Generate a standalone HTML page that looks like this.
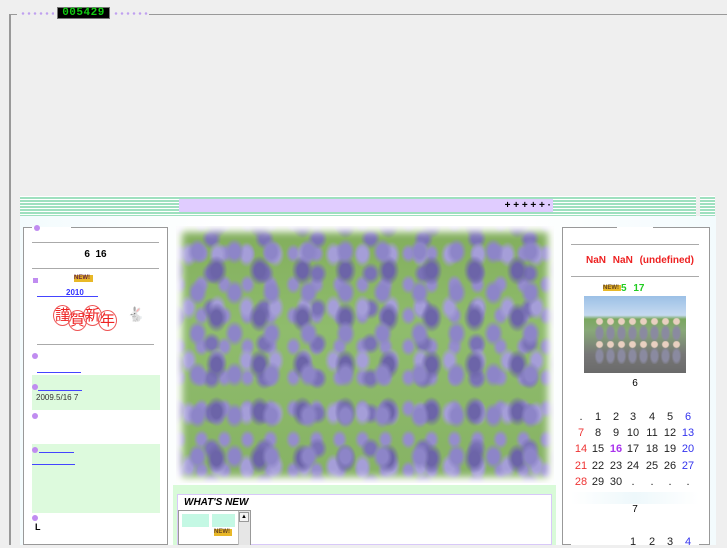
<!DOCTYPE html>
<html><head><meta charset="utf-8"><style>
*{margin:0;padding:0;box-sizing:border-box}
body{width:727px;height:545px;overflow:hidden;background:#efefef;font-family:"Liberation Sans","Noto Sans CJK JP",sans-serif;position:relative}
.a{position:absolute}
.dot{position:absolute;width:6px;height:6px;border-radius:50%;background:#c08cf0}
.stripe{background:repeating-linear-gradient(#fff 0 1px,#9ee0bf 1px 3px)}
.ul{position:absolute;height:1px;background:#4444ff}
.photo{background:
radial-gradient(ellipse 10px 13px at 50% 50%,#8d85c8 0 50%,transparent 100%) 3px 5px/37px 41px,
radial-gradient(ellipse 11px 15px at 50% 50%,#6c64a8 0 45%,transparent 100%) 19px 21px/43px 47px,
radial-gradient(ellipse 9px 13px at 50% 50%,#a59ed8 0 45%,transparent 100%) 27px 2px/29px 53px,
radial-gradient(ellipse 10px 11px at 50% 50%,#7a72b6 0 45%,transparent 100%) 9px 30px/53px 35px,
radial-gradient(ellipse 8px 10px at 50% 50%,#958dcc 0 45%,transparent 100%) 14px 12px/23px 31px,
linear-gradient(#82ae5c,#8fbc6c 40%,#86b264);
box-shadow:inset 0 0 8px 6px #fff;}
.cal span{position:absolute;width:18px;text-align:center;font-size:11px;color:#222}
.st{display:inline-block;width:19px;height:21px;border:1px solid #e55;border-radius:50%;text-align:center;line-height:19px;font-size:15px;color:#e22;margin-right:-4px}
</style></head><body>
<div class="a" style="left:9px;top:14px;width:2px;height:531px;background:#999"></div>
<div class="a" style="left:9px;top:14px;width:8px;height:1px;background:#999"></div>
<div class="a" style="left:149px;top:14px;width:578px;height:1px;background:#999"></div>
<div class="a" style="left:20px;top:12px;width:34px;height:3px;background:radial-gradient(circle,#c0a0f0 1px,transparent 1.5px) 0 0/6px 3px"></div>
<div class="a" style="left:113px;top:12px;width:36px;height:3px;background:radial-gradient(circle,#c0a0f0 1px,transparent 1.5px) 0 0/6px 3px"></div>
<div class="a" style="left:57px;top:7px;width:53px;height:12px;background:#000;border:1px solid #777;color:#1c1;font:bold 11px/10px 'Liberation Mono',monospace;letter-spacing:0.5px;text-align:center">005429</div>

<div class="a stripe" style="left:20px;top:196px;width:676px;height:20px"></div>
<div class="a stripe" style="left:700px;top:196px;width:15px;height:20px"></div>
<div class="a" style="left:179px;top:199px;width:374px;height:13px;background:#e0ccff;font-size:10px;font-weight:bold;text-align:right;line-height:13px;padding-right:2px">+ + + + + ·</div>
<div class="a" style="left:20px;top:216px;width:696px;height:329px;background:linear-gradient(90deg,#f3fbfd,#fff 30%,#fff 70%,#f3fbfd)"></div>

<div class="a" style="left:23px;top:227px;width:145px;height:318px;border:1px solid #999;border-top:none;background:#fff"></div>
<div class="a" style="left:23px;top:227px;width:9px;height:1px;background:#999"></div>
<div class="a" style="left:71px;top:227px;width:97px;height:1px;background:#999"></div>
<div class="dot" style="left:34px;top:225px"></div>
<div class="a" style="left:32px;top:242px;width:127px;height:1px;background:#aaa"></div>
<div class="a" style="left:32px;top:249px;width:127px;text-align:center;font-size:10px;font-weight:bold">6&nbsp; 16</div>
<div class="a" style="left:32px;top:268px;width:127px;height:1px;background:#aaa"></div>
<div class="a" style="left:33px;top:278px;width:5px;height:5px;background:#c08cf0"></div>
<div class="a" style="left:74px;top:275px;width:19px;height:7px;background:#e8b828;font-size:6px;font-weight:bold;line-height:7px;color:#624">NEW!</div>
<div class="a" style="left:66px;top:288px;font-size:8px;font-weight:bold;color:#33f">2010</div>
<div class="ul" style="left:37px;top:296px;width:61px"></div>
<div class="a" style="left:53px;top:305px;white-space:nowrap"><span class="st">謹</span><span class="st" style="position:relative;top:5px">賀</span><span class="st">新</span><span class="st" style="position:relative;top:5px">年</span></div>
<div class="a" style="left:127px;top:306px;font-size:14px;color:#999">🐇</div>
<div class="a" style="left:37px;top:344px;width:117px;height:1px;background:#aaa"></div>
<div class="dot" style="left:32px;top:353px"></div>
<div class="ul" style="left:37px;top:372px;width:44px"></div>
<div class="a" style="left:32px;top:375px;width:128px;height:35px;background:#ddfadd"></div>
<div class="dot" style="left:32px;top:384px"></div>
<div class="ul" style="left:38px;top:390px;width:44px"></div>
<div class="a" style="left:36px;top:393px;font-size:8px;color:#333">2009.5/16 7</div>
<div class="dot" style="left:32px;top:413px"></div>
<div class="a" style="left:32px;top:444px;width:128px;height:69px;background:#ddfadd"></div>
<div class="dot" style="left:32px;top:447px"></div>
<div class="ul" style="left:39px;top:452px;width:35px"></div>
<div class="ul" style="left:32px;top:464px;width:43px"></div>
<div class="dot" style="left:32px;top:515px"></div>
<div class="a" style="left:35px;top:522px;font-size:9px;font-weight:bold">L</div>

<div class="a photo" style="left:176px;top:226px;width:378px;height:257px"></div>
<div class="a" style="left:173px;top:485px;width:383px;height:60px;background:#d8fad8"></div>
<div class="a" style="left:177px;top:494px;width:375px;height:51px;background:#fff;border:1px solid #d8c8f8"></div>
<div class="a" style="left:184px;top:497px;font-size:10px;font-weight:bold;font-style:italic">WHAT'S NEW</div>
<div class="a" style="left:178px;top:510px;width:73px;height:35px;border:1px solid #999;background:#fff"></div>
<div class="a" style="left:182px;top:514px;width:27px;height:13px;background:#c4f8e4"></div>
<div class="a" style="left:212px;top:514px;width:23px;height:13px;background:#c4f8e4"></div>
<div class="a" style="left:214px;top:529px;width:18px;height:7px;background:#e8b828;font-size:6px;font-weight:bold;line-height:7px;color:#642">NEW!</div>
<div class="a" style="left:238px;top:511px;width:12px;height:34px;background:#e6e6e6;border-left:1px solid #bbb"></div>
<div class="a" style="left:239px;top:512px;width:10px;height:10px;background:#f4f4f4;border:1px solid #999;font-size:6px;text-align:center;line-height:9px">▲</div>

<div class="a" style="left:562px;top:227px;width:148px;height:318px;border:1px solid #999;border-top:none;background:#fff"></div>
<div class="a" style="left:562px;top:227px;width:55px;height:1px;background:#999"></div>
<div class="a" style="left:653px;top:227px;width:57px;height:1px;background:#999"></div>
<div class="a" style="left:571px;top:244px;width:128px;height:1px;background:#aaa"></div>
<div class="a" style="left:586px;top:255px;font-size:10px;font-weight:bold;color:#e22;word-spacing:4px">NaN NaN (undefined)</div>
<div class="a" style="left:571px;top:276px;width:128px;height:1px;background:#aaa"></div>
<div class="a" style="left:603px;top:285px;width:18px;height:6px;background:#e8b828;font-size:6px;font-weight:bold;line-height:6px;color:#642">NEW!</div>
<div class="a" style="left:621px;top:283px;font-size:10px;font-weight:bold;color:#2c2;word-spacing:4px">5 17</div>
<div class="a" style="left:584px;top:296px;width:102px;height:77px;background:linear-gradient(#9cc0e6 0,#c6daf0 25%,#7aa860 30%,#88a878 45%,#777 75%,#6a6a6a 100%)"></div>
<div class="a" style="left:594px;top:318px;width:88px;height:46px;background:
radial-gradient(ellipse 4px 4px at 50% 15%,#e8d0c0 0 70%,transparent 100%) 0 0/11px 23px,
radial-gradient(ellipse 5px 9px at 50% 65%,#8a8aa0 0 60%,transparent 100%) 0 0/11px 23px"></div>
<div class="a" style="left:571px;top:376px;width:128px;height:169px;background:#fff"></div>
<div class="a" style="left:571px;top:378px;width:128px;text-align:center;font-size:10px">6</div>
<div class="cal">
<span style="left:572px;top:411px">.</span><span style="left:589px;top:411px">1</span><span style="left:607px;top:411px">2</span><span style="left:624px;top:411px">3</span><span style="left:643px;top:411px">4</span><span style="left:661px;top:411px">5</span><span style="left:679px;top:411px;color:#33e">6</span>
<span style="left:572px;top:427px;color:#e33">7</span><span style="left:589px;top:427px">8</span><span style="left:607px;top:427px">9</span><span style="left:624px;top:427px">10</span><span style="left:643px;top:427px">11</span><span style="left:661px;top:427px">12</span><span style="left:679px;top:427px;color:#33e">13</span>
<span style="left:572px;top:443px;color:#e33">14</span><span style="left:589px;top:443px">15</span><span style="left:607px;top:443px;color:#a3e;font-weight:bold">16</span><span style="left:624px;top:443px">17</span><span style="left:643px;top:443px">18</span><span style="left:661px;top:443px">19</span><span style="left:679px;top:443px;color:#33e">20</span>
<span style="left:572px;top:460px;color:#e33">21</span><span style="left:589px;top:460px">22</span><span style="left:607px;top:460px">23</span><span style="left:624px;top:460px">24</span><span style="left:643px;top:460px">25</span><span style="left:661px;top:460px">26</span><span style="left:679px;top:460px;color:#33e">27</span>
<span style="left:572px;top:476px;color:#e33">28</span><span style="left:589px;top:476px">29</span><span style="left:607px;top:476px">30</span><span style="left:624px;top:476px">.</span><span style="left:643px;top:476px">.</span><span style="left:661px;top:476px">.</span><span style="left:679px;top:476px">.</span>
</div>
<div class="a" style="left:571px;top:492px;width:128px;height:12px;background:linear-gradient(90deg,#fff,#eef8fb,#fff)"></div>
<div class="a" style="left:571px;top:504px;width:128px;text-align:center;font-size:10px">7</div>
<div class="cal">
<span style="left:624px;top:536px">1</span><span style="left:643px;top:536px">2</span><span style="left:661px;top:536px">3</span><span style="left:679px;top:536px;color:#33e">4</span>
</div>
</body></html>
